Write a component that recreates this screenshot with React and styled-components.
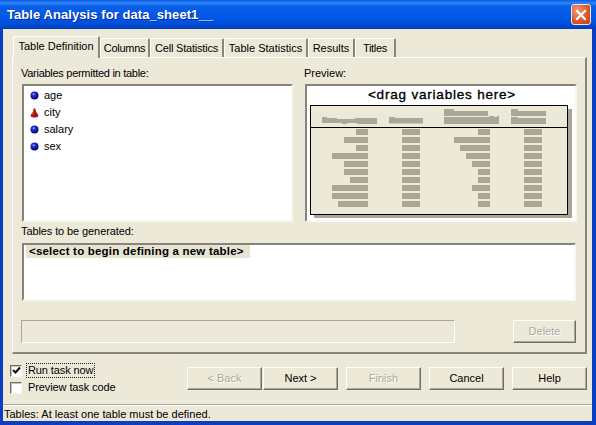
import React from "react";
import styled, { createGlobalStyle } from "styled-components";

const Global = createGlobalStyle`
  html, body { margin: 0; padding: 0; background: #ece9d8; overflow: hidden; }
  * { box-sizing: border-box; }
`;

const Window = styled.div`
  width: 596px; height: 425px; display: flex; flex-direction: column;
  background: #0a3fc4; color: #000;
  font: 11px/13px "Liberation Sans", Arial, sans-serif;
`;
const TitleBar = styled.div`
  height: 29px; flex: none; display: flex; align-items: center; justify-content: space-between;
  padding: 0 5px 0 7px;
  background: linear-gradient(180deg, #0a5be8 0%, #2f86f5 10%, #0a5fe8 22%, #0055e5 70%, #0048d0 90%, #003cb0 100%);
`;
const Title = styled.div`
  color: #fff; font: bold 13px "Liberation Sans", sans-serif; letter-spacing: 0.07px;
  text-shadow: 1px 1px 0 #0a2a90;
`;
const CloseButton = styled.div`
  width: 20px; height: 21px; border: 1px solid #f4e4dc; border-radius: 3px;
  background: radial-gradient(circle at 30% 30%, #f09878, #d8562c 60%, #c03c18);
  display: flex; align-items: center; justify-content: center;
`;
const Client = styled.div`
  flex: 1; margin: 0 4px 4px 3px; background: #ece9d8; display: flex; flex-direction: column; min-height: 0;
`;
const TabStrip = styled.div`
  display: flex; height: 28px; padding: 7px 0 0 10px; align-items: flex-end; position: relative; z-index: 1;
`;
const Tab = styled.div`
  height: ${p => (p.$active ? "22px" : "19px")};
  width: ${p => p.$w}px;
  margin-bottom: ${p => (p.$active ? "-1px" : "0")};
  background: #ece9d8;
  border-top: 1px solid #fff; border-left: 1px solid #fff;
  border-right: 2px solid #8a8778; border-radius: 2px 2px 0 0;
  display: flex; align-items: center; justify-content: center;
  letter-spacing: ${p => p.$spacing || 0}px;
  padding-bottom: ${p => (p.$active ? "3px" : "0")};
`;
const Sheet = styled.div`
  margin: 0 5px 0 9px; height: 297px; flex: none;
  border: 1px solid #fff; border-right: 2px solid #8a8778; border-bottom: 2px solid #8a8778;
  padding: 9px 9px 0 9px;
`;
const TopGrid = styled.div`
  display: grid; grid-template-columns: 271px 272px; column-gap: 12px; grid-template-rows: 17px 138px;
`;
const FieldLabel = styled.div`
  margin-left: -1px;
  letter-spacing: ${p => p.$spacing || 0}px;
`;
const Sunken = styled.div`
  background: #fff; border-style: solid; border-width: 2px;
  border-color: #86847a #f8f7f0 #f8f7f0 #86847a;
`;
const VarList = styled(Sunken)`
  padding: 1px 0 0 6px; display: flex; flex-direction: column;
`;
const VarRow = styled.div`
  height: 17px; display: flex; align-items: center; gap: 5px;
`;
const PreviewBox = styled(Sunken)`
  display: flex; flex-direction: column; align-items: center;
`;
const DragText = styled.div`
  font: 13.5px/17px "Liberation Sans", sans-serif; letter-spacing: 0.8px; height: 19px; margin-left: 2px; -webkit-text-stroke: 0.35px #000;
`;
const TablesLabel = styled.div`
  height: 21px; padding-top: 3px; margin-left: -1px; letter-spacing: -0.1px;
`;
const TablesBox = styled(Sunken)`
  height: 58px; padding: 0 0 0 2px;
`;
const NewTable = styled.div`
  display: inline-block; background: #e6e3d3; height: 13px; padding: 0 0 0 3px; width: 224px; white-space: nowrap;
  font: bold 11.5px/13px "Liberation Sans", sans-serif; letter-spacing: 0.2px;
`;
const ActionRow = styled.div`
  display: flex; justify-content: space-between; margin: 19px 0 0 -1px; height: 23px;
`;
const DisabledField = styled.div`
  width: 434px; border: 1px solid; border-color: #aca899 #fff #fff #aca899;
`;
const Button = styled.div`
  width: ${p => p.$w || 75}px; height: 23px; flex: none; margin-left: ${p => p.$gap || 0}px;
  display: flex; align-items: center; justify-content: center;
  color: ${p => (p.$disabled ? "#aca899" : "#000")};
  text-shadow: ${p => (p.$disabled ? "1px 1px 0 #fff" : "none")};
  background: #ece9d8;
  border: 1px solid; border-color: #fff #716f64 #716f64 #fff;
  box-shadow: inset -1px -1px 0 #aca899;
`;
const Footer = styled.div`
  height: 50px; flex: none; display: flex; padding: 8px 5px 0 7px;
`;
const Checks = styled.div`
  display: flex; flex-direction: column;
`;
const CheckRow = styled.div`
  height: 17px; display: flex; align-items: center; gap: 5px;
`;
const CheckBox = styled.div`
  width: 12px; height: 12px; background: #fff; display: flex; align-items: center; justify-content: center;
  border: 1px solid; border-color: #716f64 #f8f7f0 #f8f7f0 #716f64; box-shadow: inset 1px 1px 0 #c8c5b5;
`;
const CheckText = styled.span`
  padding: 0 1px; letter-spacing: -0.1px;
  ${p => p.$focus ? "outline: 1px dotted #222; outline-offset: 0;" : ""}
`;
const Buttons = styled.div`
  margin-left: auto; margin-top: 5px; display: flex; align-items: flex-start;
`;
const StatusBar = styled.div`
  flex: 1; border-top: 1px solid #aca899; box-shadow: inset 0 1px 0 #fff; padding: 2px 0 0 1px; display: flex; align-items: center;
`;

const Ball = () => (
  <svg width="9" height="9" viewBox="0 0 9 9">
    <defs>
      <radialGradient id="ball" cx="0.4" cy="0.35" r="0.65">
        <stop offset="0" stopColor="#a8b8ff" />
        <stop offset="0.3" stopColor="#2030d8" />
        <stop offset="1" stopColor="#00006c" />
      </radialGradient>
    </defs>
    <circle cx="4.5" cy="4.5" r="4" fill="url(#ball)" />
  </svg>
);
const Cone = () => (
  <svg width="9" height="10" viewBox="0 0 9 10">
    <path d="M4.5 0.3 C5.4 0.3 5.6 1.6 6 3.2 C6.4 4.8 8.2 6.2 8.4 7.4 C8.5 8.8 6.4 9.4 4.5 9.4 C2.6 9.4 0.5 8.8 0.6 7.4 C0.8 6.2 2.6 4.8 3 3.2 C3.4 1.6 3.6 0.3 4.5 0.3Z" fill="#b01010" />
    <path d="M4 2 C3.6 4 2.6 5.4 2 7" stroke="#e05a50" strokeWidth="1" fill="none" />
  </svg>
);

const col1 = [12, 24, 12, 36, 24, 24, 18, 36, 36, 30];
const col3 = [12, 36, 30, 24, 18, 12, 12, 18, 12, 12];
const BAR = "#aaa797";

const TableDiagram = () => (
  <svg width="264" height="114" viewBox="0 0 264 114" style={{ display: "block", marginLeft: 1 }}>
    <rect x="4" y="4" width="258" height="109" fill="#a9a698" />
    <rect x="0.5" y="0.5" width="257" height="109" fill="#ece9d8" stroke="#000" />
    <line x1="0" y1="22.5" x2="258" y2="22.5" stroke="#000" />
    <path d="M12 12h5v1h10v1h18v-1h22v6h-20v-1h-10v1h-5v-1h-20z" fill={BAR} />
    <path d="M79 12h6v1h28v5.500h-34z" fill={BAR} />
    <path d="M134 4h10v2h34v5h-44z" fill={BAR} />
    <path d="M134 12h45v-1h5v1h3v-1h2v8h-55z" fill={BAR} />
    <path d="M201 4h7v2h28v5h-35z" fill={BAR} />
    <path d="M201 12h7v1h28v6h-35z" fill={BAR} />
    {col1.map((w, i) => <rect key={"a" + i} x={58 - w} y={24 + i * 8} width={w} height="6" fill={BAR} />)}
    {col1.map((_, i) => <rect key={"b" + i} x="92" y={24 + i * 8} width="18" height="6" fill={BAR} />)}
    {col3.map((w, i) => <rect key={"c" + i} x={180 - w} y={24 + i * 8} width={w} height="6" fill={BAR} />)}
    {col3.map((_, i) => <rect key={"d" + i} x="214" y={24 + i * 8} width="18" height="6" fill={BAR} />)}
  </svg>
);

export default function App() {
  return (
    <Window>
      <Global />
      <TitleBar>
        <Title>Table Analysis for data_sheet1__</Title>
        <CloseButton>
          <svg width="12" height="12" viewBox="0 0 12 12">
            <path d="M2 2 L10 10 M10 2 L2 10" stroke="#fff" strokeWidth="2.2" strokeLinecap="square" />
          </svg>
        </CloseButton>
      </TitleBar>
      <Client>
        <TabStrip>
          <Tab $active $w={87}>Table Definition</Tab>
          <Tab $w={50} $spacing={-0.3}>Columns</Tab>
          <Tab $w={74} $spacing={-0.2}>Cell Statistics</Tab>
          <Tab $w={84}>Table Statistics</Tab>
          <Tab $w={47}>Results</Tab>
          <Tab $w={41} $spacing={-0.3}>Titles</Tab>
        </TabStrip>
        <Sheet>
          <TopGrid>
            <FieldLabel $spacing={-0.28}>Variables permitted in table:</FieldLabel>
            <FieldLabel>Preview:</FieldLabel>
            <VarList>
              <VarRow><Ball />age</VarRow>
              <VarRow><Cone />city</VarRow>
              <VarRow><Ball />salary</VarRow>
              <VarRow><Ball />sex</VarRow>
            </VarList>
            <PreviewBox>
              <DragText>&lt;drag variables here&gt;</DragText>
              <TableDiagram />
            </PreviewBox>
          </TopGrid>
          <TablesLabel>Tables to be generated:</TablesLabel>
          <TablesBox>
            <NewTable>&lt;select to begin defining a new table&gt;</NewTable>
          </TablesBox>
          <ActionRow>
            <DisabledField />
            <Button $w={63} $disabled>Delete</Button>
          </ActionRow>
        </Sheet>
        <Footer>
          <Checks>
            <CheckRow>
              <CheckBox>
                <svg width="9" height="9" viewBox="0 0 9 9">
                  <path d="M1 4 L3.500 6.500 L8 1.500" stroke="#111" strokeWidth="2" fill="none" />
                </svg>
              </CheckBox>
              <CheckText $focus>Run task now</CheckText>
            </CheckRow>
            <CheckRow>
              <CheckBox />
              <CheckText>Preview task code</CheckText>
            </CheckRow>
          </Checks>
          <Buttons>
            <Button $disabled>&lt; Back</Button>
            <Button $gap={1}>Next &gt;</Button>
            <Button $gap={8} $disabled>Finish</Button>
            <Button $gap={8}>Cancel</Button>
            <Button $gap={8}>Help</Button>
          </Buttons>
        </Footer>
        <StatusBar>Tables: At least one table must be defined.</StatusBar>
      </Client>
    </Window>
  );
}
